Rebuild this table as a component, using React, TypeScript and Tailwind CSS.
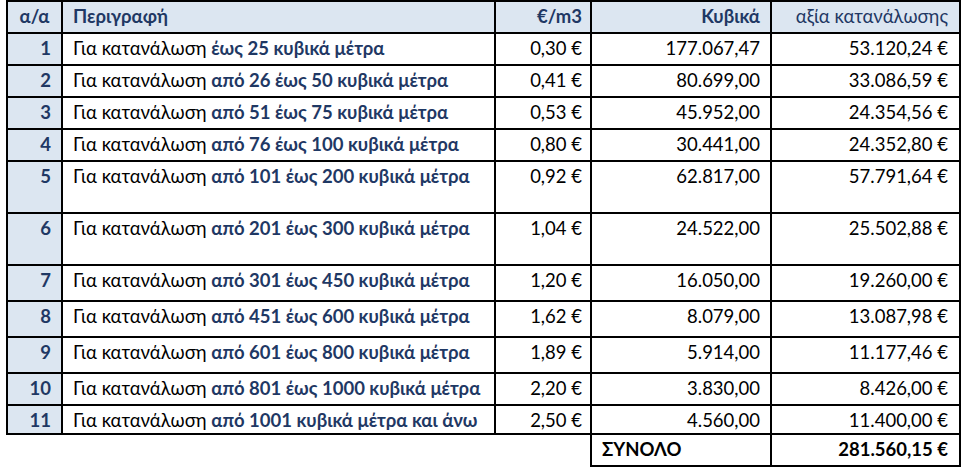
const rows = [
  { n: 1, pre: "Για κατανάλωση ", bold: "έως 25 κυβικά μέτρα", price: "0,30 €", vol: "177.067,47", val: "53.120,24 €", h: "h-[32px]" },
  { n: 2, pre: "Για κατανάλωση ", bold: "από 26 έως 50 κυβικά μέτρα", price: "0,41 €", vol: "80.699,00", val: "33.086,59 €", h: "h-[32px]" },
  { n: 3, pre: "Για κατανάλωση ", bold: "από 51 έως 75 κυβικά μέτρα", price: "0,53 €", vol: "45.952,00", val: "24.354,56 €", h: "h-[32px]" },
  { n: 4, pre: "Για κατανάλωση ", bold: "από 76 έως 100 κυβικά μέτρα", price: "0,80 €", vol: "30.441,00", val: "24.352,80 €", h: "h-[32px]" },
  { n: 5, pre: "Για κατανάλωση ", bold: "από 101 έως 200 κυβικά μέτρα", price: "0,92 €", vol: "62.817,00", val: "57.791,64 €", h: "h-[52px]" },
  { n: 6, pre: "Για κατανάλωση ", bold: "από 201 έως 300 κυβικά μέτρα", price: "1,04 €", vol: "24.522,00", val: "25.502,88 €", h: "h-[52px]" },
  { n: 7, pre: "Για κατανάλωση ", bold: "από 301 έως 450 κυβικά μέτρα", price: "1,20 €", vol: "16.050,00", val: "19.260,00 €", h: "h-[36px]" },
  { n: 8, pre: "Για κατανάλωση ", bold: "από 451 έως 600 κυβικά μέτρα", price: "1,62 €", vol: "8.079,00", val: "13.087,98 €", h: "h-[36px]" },
  { n: 9, pre: "Για κατανάλωση ", bold: "από 601 έως 800 κυβικά μέτρα", price: "1,89 €", vol: "5.914,00", val: "11.177,46 €", h: "h-[36px]" },
  { n: 10, pre: "Για κατανάλωση ", bold: "από 801 έως 1000 κυβικά μέτρα", price: "2,20 €", vol: "3.830,00", val: "8.426,00 €", h: "h-[32px]" },
  { n: 11, pre: "Για κατανάλωση ", bold: "από 1001 κυβικά μέτρα και άνω", price: "2,50 €", vol: "4.560,00", val: "11.400,00 €", h: "h-[29px]" },
]

const cell = "border-2 border-black align-top pt-[2px] leading-[24px]"

const App = () => {
  return (
    <div className="bg-white w-[966px] h-[469px] pl-[6px] pt-0 font-['Lato','Noto_Sans',sans-serif] text-[18.5px] text-black">
      <table className="table-fixed border-collapse w-[953px]">
        <colgroup>
          <col className="w-[55px]" />
          <col className="w-[433px]" />
          <col className="w-[96px]" />
          <col className="w-[180px]" />
          <col className="w-[189px]" />
        </colgroup>
        <thead>
          <tr className="h-[32px] bg-[#dce6f1] text-[#1f3864]">
            <th className={`${cell} text-center font-bold`}>α/α</th>
            <th className={`${cell} text-left pl-[10px] font-bold`}>Περιγραφή</th>
            <th className={`${cell} text-right pr-[8px] font-bold`}>€/m3</th>
            <th className={`${cell} text-right pr-[10px] font-bold`}>Κυβικά</th>
            <th className={`${cell} text-right pr-[11px] font-normal`}>αξία κατανάλωσης</th>
          </tr>
        </thead>
        <tbody>
          {rows.map((r) => (
            <tr key={r.n} className={r.h}>
              <td className={`${cell} bg-[#dce6f1] text-right pr-[10px] font-bold text-[#1f3864]`}>{r.n}</td>
              <td className={`${cell} pl-[10px] whitespace-nowrap`}>
                {r.pre}
                <span className="font-bold text-[#1f3864]">{r.bold}</span>
              </td>
              <td className={`${cell} text-right pr-[8px]`}>{r.price}</td>
              <td className={`${cell} text-right pr-[10px]`}>{r.vol}</td>
              <td className={`${cell} text-right pr-[11px]`}>{r.val}</td>
            </tr>
          ))}
          <tr className="h-[32px]">
            <td colSpan={3} className="border-0"></td>
            <td className={`${cell} pl-[10px] font-bold`}>ΣΥΝΟΛΟ</td>
            <td className={`${cell} text-right pr-[11px] font-bold`}>281.560,15 €</td>
          </tr>
        </tbody>
      </table>
    </div>
  )
}

export default App
